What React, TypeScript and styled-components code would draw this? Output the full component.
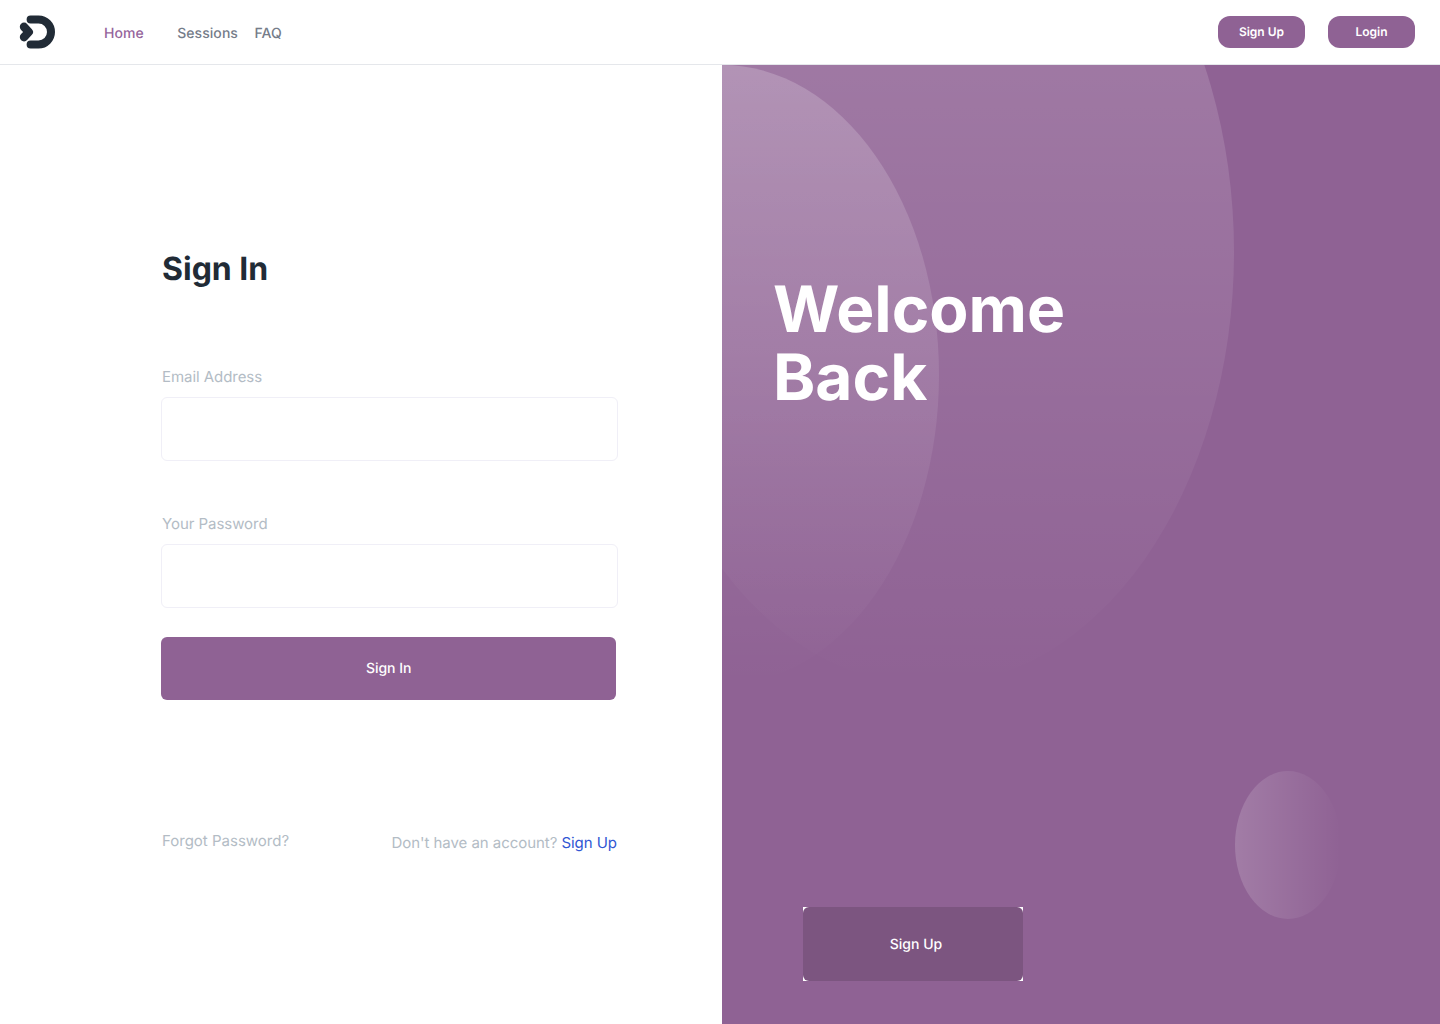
import React from "react";
import styled, { createGlobalStyle } from "styled-components";

const GlobalStyle = createGlobalStyle`
  *, *::before, *::after { box-sizing: border-box; }
  body { margin: 0; background: #fff; font-family: Inter, "Liberation Sans", sans-serif; text-rendering: geometricPrecision; }
  button, input { font-family: inherit; text-rendering: inherit; }
`;

const Page = styled.div`
  display: flex;
  flex-direction: column;
  width: 1440px;
  height: 1024px;
  overflow: hidden;
`;

const Header = styled.header`
  display: flex;
  align-items: center;
  flex: none;
  height: 65px;
  padding: 0 25px 1px 19px;
  border-bottom: 1px solid #e5e7eb;
`;

const Logo = styled.svg`
  display: block;
  width: 37px;
  height: 36px;
`;

const Nav = styled.nav`
  display: flex;
  margin-left: 48px;
  padding-top: 4px;
`;

const NavLink = styled.a<{ $active?: boolean; $gap?: number }>`
  margin-right: ${(p) => p.$gap ?? 0}px;
  color: ${(p) => (p.$active ? "#96659c" : "#757c89")};
  font-size: 14px;
  line-height: 20px;
  font-weight: 500;
  letter-spacing: 0.05px;
`;

const Actions = styled.div`
  display: flex;
  gap: 23px;
  margin-left: auto;
`;

const PillButton = styled.button`
  width: 87px;
  height: 32px;
  padding: 0;
  border: 0;
  border-radius: 12px;
  background: #8f6294;
  color: #fff;
  font-size: 12px;
  font-weight: 600;
`;

const Main = styled.main`
  display: flex;
  flex: 1;
  min-height: 0;
`;

const FormSide = styled.section`
  width: 722px;
  padding: 184px 104px 0 161px;
`;

const Title = styled.h1`
  margin: 0 0 77px;
  padding-left: 1px;
  color: #212b36;
  font-size: 32px;
  line-height: 40px;
  font-weight: 700;
`;

const Field = styled.label`
  display: block;
  margin-bottom: 52px;
`;

const FieldLabel = styled.span`
  display: block;
  margin-bottom: 10px;
  padding-left: 1px;
  color: #b3bcc5;
  font-size: 15px;
  line-height: 21px;
  letter-spacing: -0.05px;
`;

const Input = styled.input`
  display: block;
  width: 457px;
  height: 64px;
  padding: 0 16px;
  border: 1px solid #f0eff7;
  border-radius: 6px;
  background: #fff;
`;

const SubmitButton = styled.button`
  display: block;
  width: 455.4px;
  height: 63px;
  margin-top: -23px;
  padding-bottom: 2px;
  border: 0;
  border-radius: 6px;
  background: #8f6294;
  color: #fff;
  font-size: 14px;
  font-weight: 500;
`;

const FormFooter = styled.div`
  display: flex;
  justify-content: space-between;
  align-items: flex-start;
  margin-top: 130px;
  padding-left: 1px;
  color: #b3bcc5;
  font-size: 15px;
  line-height: 22px;
`;

const SignUpPrompt = styled.span`
  padding: 2px 1px 0 0;
  letter-spacing: -0.05px;
`;

const SignUpLink = styled.a`
  color: #3056d3;
`;

const WelcomeSide = styled.section`
  position: relative;
  flex: 1;
  padding: 211px 51px 0;
  overflow: hidden;
  background: #8f6294;
`;

const Orb = styled.div<{ $x: number; $y: number; $rx: number; $ry: number; $angle: number; $alpha: number }>`
  position: absolute;
  left: ${(p) => p.$x - p.$rx}px;
  top: ${(p) => p.$y - p.$ry}px;
  width: ${(p) => p.$rx * 2}px;
  height: ${(p) => p.$ry * 2}px;
  border-radius: 50%;
  background: linear-gradient(${(p) => p.$angle}deg, rgba(255, 255, 255, ${(p) => p.$alpha}), rgba(255, 255, 255, 0));
`;

const Welcome = styled.h2`
  position: relative;
  margin: 0;
  color: #fff;
  font-size: 64px;
  line-height: 68px;
  font-weight: 700;
`;

const ButtonPlate = styled.div`
  position: relative;
  width: 220px;
  height: 74px;
  margin: 495px 0 0 30px;
  background: #fff;
`;

const PlateButton = styled.button`
  width: 100%;
  height: 100%;
  padding: 0 0 0 6px;
  border: 0;
  border-radius: 6px;
  background: #7c5580;
  color: #fff;
  font-size: 14px;
  font-weight: 500;
`;

export default function App() {
  return (
    <>
      <GlobalStyle />
      <Page>
        <Header>
          <Logo viewBox="0 0 37 36" fill="none" stroke="#212b36" strokeWidth="8" strokeLinecap="round" strokeLinejoin="round">
            <path d="M11.6 5.5H19.5A12.5 12.5 0 0 1 19.5 30.5H11.6" />
            <path d="M5 12.8L9.8 18L5 23.2" strokeWidth="8.4" />
          </Logo>
          <Nav>
            <NavLink $active $gap={33.5}>Home</NavLink>
            <NavLink $gap={16.5}>Sessions</NavLink>
            <NavLink>FAQ</NavLink>
          </Nav>
          <Actions>
            <PillButton>Sign Up</PillButton>
            <PillButton>Login</PillButton>
          </Actions>
        </Header>
        <Main>
          <FormSide>
            <Title>Sign In</Title>
            <Field>
              <FieldLabel>Email Address</FieldLabel>
              <Input type="email" />
            </Field>
            <Field>
              <FieldLabel>Your Password</FieldLabel>
              <Input type="password" />
            </Field>
            <SubmitButton>Sign In</SubmitButton>
            <FormFooter>
              <span>Forgot Password?</span>
              <SignUpPrompt>
                Don't have an account? <SignUpLink>Sign Up</SignUpLink>
              </SignUpPrompt>
            </FormFooter>
          </FormSide>
          <WelcomeSide>
            <Orb $x={208} $y={187} $rx={304} $ry={434} $angle={180} $alpha={0.2} />
            <Orb $x={0} $y={310} $rx={217} $ry={310} $angle={180} $alpha={0.2} />
            <Orb $x={566} $y={780} $rx={53} $ry={74} $angle={90} $alpha={0.17} />
            <Welcome>
              Welcome
              <br />
              Back
            </Welcome>
            <ButtonPlate>
              <PlateButton>Sign Up</PlateButton>
            </ButtonPlate>
          </WelcomeSide>
        </Main>
      </Page>
    </>
  );
}
